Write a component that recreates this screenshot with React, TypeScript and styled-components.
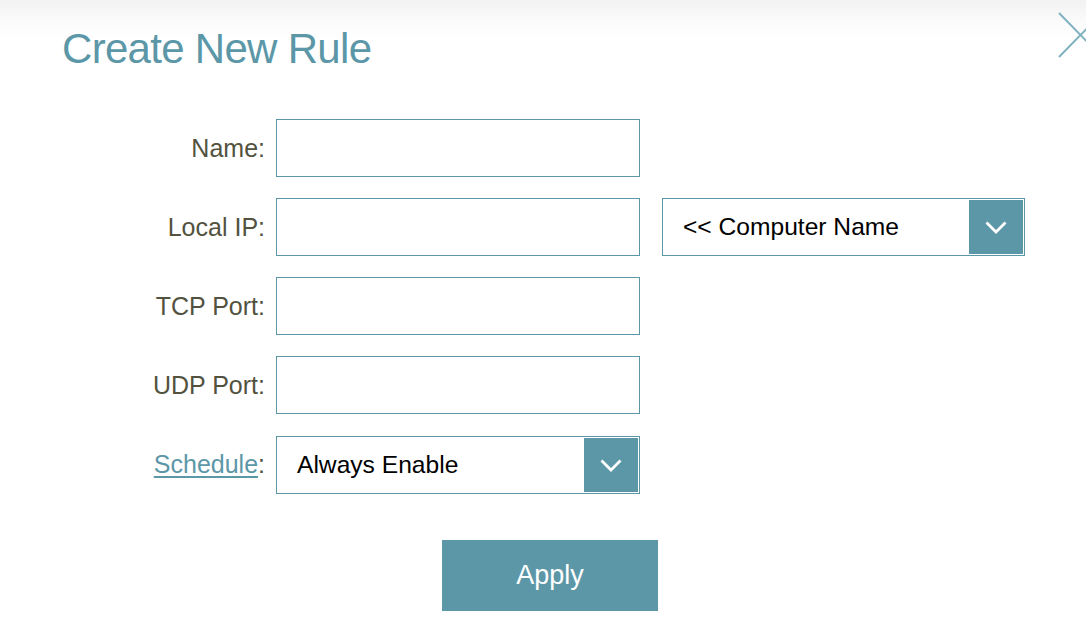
import * as React from "react";
import styled, { createGlobalStyle } from "styled-components";

const teal = "#5c97a8";

const GlobalStyle = createGlobalStyle`
  html, body {
    margin: 0;
    padding: 0;
    background: #fff;
    font-family: "Liberation Sans", Arial, Helvetica, sans-serif;
  }
`;

export default function App() {
  return (
    <>
      <GlobalStyle />
      <Dialog>
        <CloseButton aria-label="Close">
          <svg width="44" height="46" viewBox="0 0 44 46">
            <path d="M1 1 L44 45 M1 45 L44 1" stroke="#7fb1c0" strokeWidth="2" fill="none" />
          </svg>
        </CloseButton>
        <Title>Create New Rule</Title>
        <Form>
          <Label>Name:</Label>
          <TextInput />
          <span />

          <Label>Local IP:</Label>
          <TextInput />
          <Select wide>
            <SelectText>&lt;&lt; Computer Name</SelectText>
            <Chevron />
          </Select>

          <Label>TCP Port:</Label>
          <TextInput />
          <span />

          <Label>UDP Port:</Label>
          <TextInput />
          <span />

          <Label>
            <LinkText>Schedule</LinkText>:
          </Label>
          <Select>
            <SelectText>Always Enable</SelectText>
            <Chevron />
          </Select>
          <span />
        </Form>
        <ApplyButton>Apply</ApplyButton>
      </Dialog>
    </>
  );
}

function Chevron() {
  return (
    <ArrowBox>
      <svg width="22" height="13" viewBox="0 0 22 13">
        <polyline points="1.5,1.5 11,11 20.5,1.5" stroke="#fff" strokeWidth="2.8" fill="none" />
      </svg>
    </ArrowBox>
  );
}

/**
 * Styled Components
 */

const Dialog = styled.div`
  position: relative;
  width: 1086px;
  height: 636px;
  overflow: hidden;
  background: linear-gradient(#f2f2f2 0px, #fbfbfb 22px, #ffffff 42px);
`;

const CloseButton = styled.div`
  position: absolute;
  top: 12px;
  left: 1058px;
  line-height: 0;
`;

const Title = styled.h1`
  margin: 0;
  padding: 28px 0 0 62px;
  font-size: 42px;
  line-height: 42px;
  font-weight: 400;
  letter-spacing: -0.7px;
  color: ${teal};
`;

const Form = styled.div`
  display: grid;
  grid-template-columns: 276px 364px 386px;
  grid-auto-rows: 58px;
  row-gap: 21px;
  margin-top: 49px;
`;

const Label = styled.label`
  align-self: center;
  justify-self: end;
  padding-right: 11px;
  font-size: 25px;
  color: #52523f;
`;

const LinkText = styled.span`
  color: ${teal};
  text-decoration: underline;
  text-underline-offset: 3px;
`;

const TextInput = styled.div`
  box-sizing: border-box;
  height: 58px;
  border: 1px solid ${teal};
  background: #fff;
`;

type SelectProps = { wide?: boolean };

const Select = styled.div<SelectProps>`
  box-sizing: border-box;
  height: 58px;
  width: ${({ wide }) => (wide ? "363px" : "364px")};
  margin-left: ${({ wide }) => (wide ? "22px" : "0")};
  margin-top: ${({ wide }) => (wide ? "0" : "1px")};
  border: 1px solid ${teal};
  padding: 1px;
  display: flex;
  align-items: stretch;
  background: #fff;
`;

const SelectText = styled.div`
  flex: 1;
  display: flex;
  align-items: center;
  padding-left: 19px;
  font-size: 24.6px;
  color: #000;
`;

const ArrowBox = styled.div`
  width: 54px;
  background: ${teal};
  display: flex;
  align-items: center;
  justify-content: center;
`;

const ApplyButton = styled.button`
  display: block;
  margin: 47px 0 0 442px;
  width: 216px;
  height: 71px;
  border: none;
  background: ${teal};
  color: #fff;
  font-family: "Liberation Sans", Arial, sans-serif;
  font-size: 27px;
  padding: 0;
`;
